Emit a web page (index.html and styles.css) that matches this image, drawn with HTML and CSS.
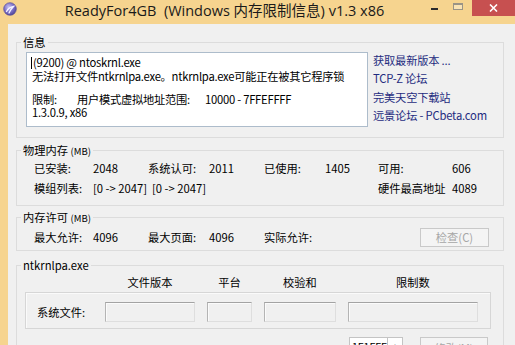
FILE: index.html
```html
<!DOCTYPE html>
<html lang="zh-CN">
<head>
<meta charset="utf-8">
<title>ReadyFor4GB</title>
<link rel="stylesheet" href="styles.css">
</head>
<body>
<div class="window">
  <div class="titlebar">
    <div class="icon-slot">
      <svg class="appicon" width="14" height="14" viewBox="0 0 14 14">
        <defs>
          <radialGradient id="gl" cx="40%" cy="35%" r="70%">
            <stop offset="0" stop-color="#c9c2ef"/>
            <stop offset="0.55" stop-color="#7d71c8"/>
            <stop offset="1" stop-color="#4b4192"/>
          </radialGradient>
        </defs>
        <circle cx="7" cy="7" r="6.3" fill="url(#gl)" stroke="#5a5098" stroke-width="0.7"/>
        <path d="M3.5 9.5 C5 6.5 7.5 5 10.5 4.5 C8.5 6.5 7 8.5 6 11" fill="none" stroke="#f4f2ff" stroke-width="1.3" stroke-linecap="round"/>
      </svg>
    </div>
    <div class="title">ReadyFor4GB&nbsp; (Windows 内存限制信息) v1.3 x86</div>
    <div class="caption">
      <div class="cap-btn cap-min"><span class="dash"></span></div>
      <div class="cap-btn cap-max"><span class="box"></span></div>
      <div class="cap-btn cap-close">
        <svg width="9" height="8" viewBox="0 0 9 8"><path d="M1 0.5 L8 7.5 M8 0.5 L1 7.5" stroke="#ffffff" stroke-width="1.6"/></svg>
      </div>
    </div>
  </div>

  <div class="client">
    <fieldset class="group g-info">
      <legend>信息</legend>
      <div class="info-body">
        <div class="log-edit">
          <div class="ln ln1"><span class="caret"></span>(9200) @ ntoskrnl.exe</div>
          <div class="ln ln2">无法打开文件ntkrnlpa.exe。ntkrnlpa.exe可能正在被其它程序锁</div>
          <div class="ln ln3"><span class="lim">限制:</span><span class="range">用户模式虚拟地址范围:</span><span>10000 - 7FFEFFFF</span></div>
          <div class="ln ln4">1.3.0.9, x86</div>
        </div>
        <div class="links">
          <a class="link">获取最新版本 ...</a>
          <a class="link">TCP-Z 论坛</a>
          <a class="link">完美天空下载站</a>
          <a class="link">远景论坛 - PCbeta.com</a>
        </div>
      </div>
    </fieldset>

    <fieldset class="group g-phys">
      <legend>物理内存 <span class="unit">(MB)</span></legend>
      <div class="grid8">
        <span>已安装:</span><span>2048</span><span>系统认可:</span><span>2011</span><span>已使用:</span><span>1405</span><span>可用:</span><span>606</span>
        <span>模组列表:</span><span>[0 -&gt; 2047]</span><span class="shift">[0 -&gt; 2047]</span><span class="c7">硬件最高地址</span><span>4089</span>
      </div>
    </fieldset>

    <fieldset class="group g-perm">
      <legend>内存许可 <span class="unit">(MB)</span></legend>
      <div class="grid8">
        <span>最大允许:</span><span>4096</span><span>最大页面:</span><span>4096</span><span>实际允许:</span>
        <button class="btn btn-check c7wide" disabled>检查(C)</button>
      </div>
    </fieldset>

    <fieldset class="group g-file">
      <legend>ntkrnlpa.exe</legend>
      <div class="file-head">
        <span></span><span>文件版本</span><span>平台</span><span>校验和</span><span>限制数</span>
      </div>
      <div class="file-box">
        <span class="file-label">系统文件:</span>
        <span class="fedit"></span><span class="fedit"></span><span class="fedit"></span><span class="fedit"></span>
      </div>
      <div class="bottom-row">
        <div class="spin"><span class="spin-text">1F1FFFF</span><span class="spin-arrow">▲</span></div>
        <button class="btn btn-apply" disabled>修改(M)</button>
      </div>
    </fieldset>
  </div>
</div>
</body>
</html>
```

FILE: styles.css
```css
html, body {
  margin: 0;
  padding: 0;
  width: 515px;
  height: 345px;
  overflow: hidden;
}

body {
  background: #f6d48f;
  font-family: "Noto Sans CJK SC", "Noto Sans", sans-serif;
  font-size: 11.25px;
  color: #000;
}

.window {
  display: flex;
  flex-direction: column;
  height: 345px;
}

/* ---------- title bar ---------- */
.titlebar {
  height: 24px;
  display: flex;
  align-items: flex-start;
  flex: none;
}

.icon-slot {
  width: 25px;
  height: 24px;
  padding: 2px 0 0 3px;
  box-sizing: border-box;
}

.appicon { display: block; }

.title {
  flex: 1;
  text-align: center;
  font-family: "Open Sans", "Noto Sans CJK SC", sans-serif;
  font-size: 14.5px;
  line-height: 22px;
  color: #1a1a1a;
  white-space: nowrap;
}

.caption {
  display: flex;
  align-items: flex-start;
  width: 91px;
}

.cap-btn {
  height: 16px;
  display: flex;
  align-items: center;
  justify-content: center;
}

.cap-min { width: 20px; }
.cap-min .dash {
  width: 7px;
  height: 2px;
  background: #2b2b2b;
  margin-top: 1px;
}

.cap-max { width: 28px; align-items: flex-start; }
.cap-max .box {
  width: 10px;
  height: 7px;
  margin-top: 3px;
  box-sizing: border-box;
  border: 1px solid #9a9486;
  border-top-width: 2px;
  background: #f9e3b4;
}

.cap-close {
  width: 43px;
  background: #c75050;
}

/* ---------- client area ---------- */
.client {
  flex: 1;
  margin-left: 8px;
  background: #f0f0f0;
  padding: 11px 11px 0 8px;
  display: flex;
  flex-direction: column;
}

.group {
  margin: 0;
  padding: 0;
  min-width: 0;
  border: 1px solid #dcdcdc;
  flex: none;
}

.group legend {
  margin-left: 4px;
  padding: 0 2px;
  font-size: 11.25px;
  line-height: 14px;
}

.unit { font-size: 9.5px; }

/* info */
.info-body {
  display: flex;
  gap: 5px;
  padding: 3px 0 10px 9px;
}

.log-edit {
  width: 342px;
  height: 75px;
  box-sizing: border-box;
  background: #ffffff;
  border: 1px solid #adbccb;
  padding: 2px 0 0 5px;
  white-space: nowrap;
  overflow: hidden;
  letter-spacing: -0.25px;
}

.ln { line-height: 14px; }
.ln3 { margin-top: 10px; line-height: 13px; }
.ln4 { line-height: 13px; }

.caret {
  display: inline-block;
  width: 1px;
  height: 12px;
  background: #000;
  margin: 0 1px 0 -1px;
  vertical-align: -2px;
}

.lim { display: inline-block; width: 45px; }
.range { display: inline-block; width: 128px; }

.links {
  display: flex;
  flex-direction: column;
  margin-top: -1px;
}

.link {
  color: #1f2c80;
  line-height: 18.4px;
  white-space: nowrap;
  text-decoration: none;
  letter-spacing: -0.2px;
}

/* grids */
.grid8 {
  display: grid;
  grid-template-columns: 59px 55px 61px 55px 61px 53px 74px auto;
  grid-auto-rows: 20px;
  align-items: center;
  padding-left: 17px;
  white-space: nowrap;
}

.grid8 .shift { padding-left: 4px; }
.grid8 .c7 { grid-column: 7; }
.grid8 .c7wide { grid-column: 7 / span 2; }

.g-phys { margin-top: 5px; }
.g-phys .grid8 { padding-top: 0; padding-bottom: 7px; }

.g-perm { margin-top: 4px; }
.g-perm .grid8 { padding-top: 2px; padding-bottom: 3px; }

.btn {
  font-family: "Noto Sans CJK SC", sans-serif;
  font-size: 11.25px;
  padding: 0;
  box-sizing: border-box;
  background: #f4f4f4;
  border: 1px solid #c9c9c9;
  color: #a6a6a6;
}

.btn-check {
  margin-left: 42px;
  width: 69px;
  height: 19px;
  line-height: 17px;
}

/* file group */
.g-file { margin-top: 7px; }

.file-head,
.file-box {
  display: grid;
  grid-template-columns: 56px 90px 45px 72px 130px;
  column-gap: 12px;
  align-items: center;
}

.file-head {
  padding: 0 0 0 20px;
  height: 19px;
  text-align: center;
}

.file-box {
  margin: 1px 0 0 8px;
  width: 466px;
  box-sizing: border-box;
  border: 1px solid #d6d6d6;
  box-shadow: inset 1px 1px 0 #fafafa;
  padding: 9px 0 6px 11px;
}

.file-label { white-space: nowrap; }

.fedit {
  height: 20px;
  box-sizing: border-box;
  background: #f0f0f0;
  border: 1px solid;
  border-color: #a3a3a3 #dedede #dedede #b4b4b4;
  box-shadow: inset 1px 1px 0 #fbfbfb;
}

.bottom-row {
  display: flex;
  align-items: flex-start;
  margin: 8px 0 0 332px;
  gap: 17px;
}

.spin {
  width: 54px;
  height: 20px;
  box-sizing: border-box;
  background: #fff;
  border: 1px solid #c4c4c4;
  display: flex;
  font-size: 10.5px;
  line-height: 18px;
}

.spin-text { flex: 1; padding-left: 2px; overflow: hidden; }
.spin-arrow {
  width: 14px;
  border-left: 1px solid #c4c4c4;
  font-size: 7px;
  text-align: center;
  color: #333;
}

.btn-apply {
  width: 68px;
  height: 22px;
}
```
